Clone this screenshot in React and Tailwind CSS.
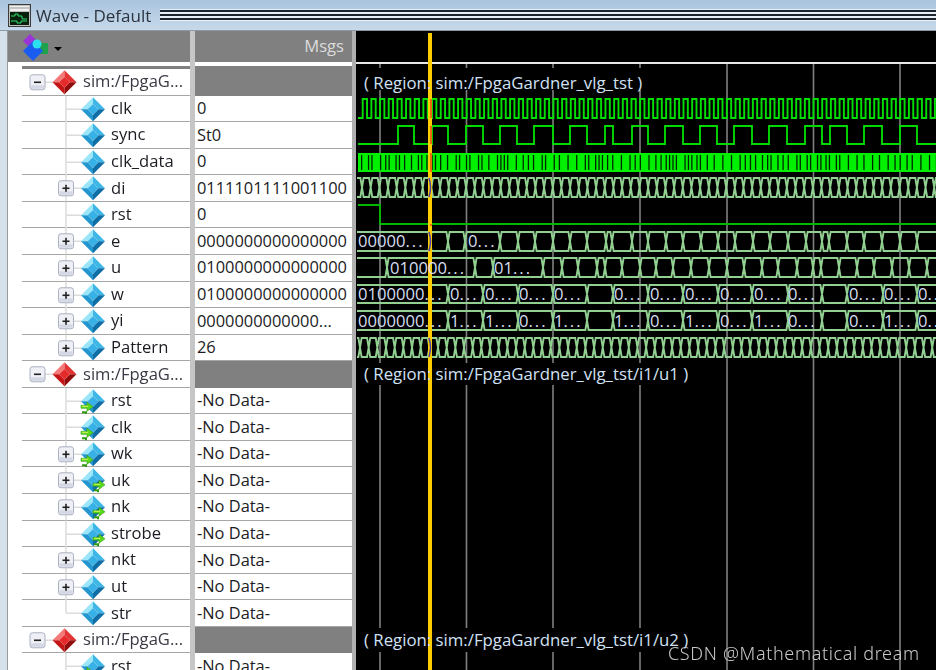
import React from "react";

const ROW_H = 26.57;

const rows = [
  { type: "group", name: "sim:/FpgaG..." },
  { name: "clk", value: "0" },
  { name: "sync", value: "St0" },
  { name: "clk_data", value: "0" },
  { name: "di", value: "0111101111001100", plus: true },
  { name: "rst", value: "0" },
  { name: "e", value: "0000000000000000", plus: true },
  { name: "u", value: "0100000000000000", plus: true },
  { name: "w", value: "0100000000000000", plus: true },
  { name: "yi", value: "0000000000000...", plus: true },
  { name: "Pattern", value: "26", plus: true, last: true },
  { type: "group", name: "sim:/FpgaG..." },
  { name: "rst", value: "-No Data-", arrow: "left" },
  { name: "clk", value: "-No Data-", arrow: "left" },
  { name: "wk", value: "-No Data-", arrow: "left", plus: true },
  { name: "uk", value: "-No Data-", arrow: "right", plus: true },
  { name: "nk", value: "-No Data-", arrow: "right", plus: true },
  { name: "strobe", value: "-No Data-", arrow: "right" },
  { name: "nkt", value: "-No Data-", plus: true },
  { name: "ut", value: "-No Data-", plus: true },
  { name: "str", value: "-No Data-", last: true },
  { type: "group", name: "sim:/FpgaG..." },
  { name: "rst", value: "-No Data-", arrow: "left" },
];

const syncEdges = [398, 414, 432, 448, 466, 483, 500, 517, 534, 553, 570, 587, 605, 613, 632, 648, 665, 683, 700, 717, 734, 752, 769, 787, 805, 822, 830, 847, 864, 882, 900, 917];
const eEdges = [430, 448, 465, 500, 518, 535, 553, 570, 587, 606, 612, 632, 648, 666, 683, 701, 718, 735, 753, 770, 788, 806, 822, 829, 847, 864, 882, 900, 917];
const uEdges = [387, 475, 493, 543, 562, 578, 597, 605, 622, 640, 656, 673, 691, 709, 727, 744, 762, 778, 797, 813, 821, 839, 857, 874, 892, 909, 927];
const wEdges = [448, 483, 518, 553, 587, 613, 648, 683, 718, 752, 788, 822, 847, 883, 917];
const gridLines = [380, 466.5, 553, 640, 727, 813.5, 900];

const lattice = (start) => {
  const out = [];
  for (let x = start; x < 940; x += 8.67) out.push(x);
  return out;
};

// clk_data: thin black gaps over a solid green bar
const dataGaps = [];
let seed = 7;
for (let x = 361; x < 936; ) {
  seed = (seed * 137 + 59) % 251;
  dataGaps.push(x);
  x += 3.4 + (seed % 4) * 1.75;
}

const Diamond = ({ cx, cy, r, red }) => {
  const c = red
    ? ["#f47a7a", "#e23434", "#8f0c0c", "#c41616", "#e42a2a"]
    : ["#9ce6fa", "#3fb7e6", "#0f6ea6", "#2496cf", "#38b2e6"];
  const i = r * 0.45;
  const t = `${cx},${cy - r}`;
  const e = `${cx + r},${cy}`;
  const b = `${cx},${cy + r}`;
  const w = `${cx - r},${cy}`;
  const it = `${cx},${cy - i}`;
  const ie = `${cx + i},${cy}`;
  const ib = `${cx},${cy + i}`;
  const iw = `${cx - i},${cy}`;
  return (
    <g>
      <polygon points={`${w} ${t} ${it} ${iw}`} fill={c[0]} />
      <polygon points={`${t} ${e} ${ie} ${it}`} fill={c[1]} />
      <polygon points={`${e} ${b} ${ib} ${ie}`} fill={c[2]} />
      <polygon points={`${b} ${w} ${iw} ${ib}`} fill={c[3]} />
      <polygon points={`${it} ${ie} ${ib} ${iw}`} fill={c[4]} />
    </g>
  );
};

const Expander = ({ cx, cy, plus }) => (
  <g>
    <rect x={cx - 7.5} y={cy - 7.5} width="15" height="15" rx="2.5" fill="#eef0f6" stroke="#a9b0c0" />
    <rect x={cx - 6.5} y={cy + 3} width="13" height="3.5" fill="#d3d8e4" />
    <rect x={cx - 3.5} y={cy - 0.8} width="7" height="1.6" fill="#222" />
    {plus && <rect x={cx - 0.8} y={cy - 3.5} width="1.6" height="7" fill="#222" />}
  </g>
);

const PortArrow = ({ cx, cy }) => (
  <g>
    <path d={`M${cx - 6} ${cy - 2}h6v-3l6 4.5l-6 4.5v-3h-6z`} fill="#5cd81c" stroke="#2f9a10" strokeWidth="0.6" />
    <path d={`M${cx - 5} ${cy + 5}h4v2`} fill="none" stroke="#2f9a10" strokeWidth="2" />
    <path d={`M${cx - 5} ${cy - 1}h6`} stroke="#d8f860" strokeWidth="1" />
  </g>
);

const Glyphs = ({ row }) => {
  const mid = ROW_H / 2;
  if (row.type === "group") {
    return (
      <svg width="61" height={ROW_H} className="shrink-0">
        <path d={`M23 ${mid}H33M42.5 ${mid}V${ROW_H}`} stroke="#dcdcdc" strokeWidth="1.5" fill="none" />
        <Expander cx={15.5} cy={mid} />
        <Diamond cx={42.5} cy={mid} r={12} red />
      </svg>
    );
  }
  return (
    <svg width="89" height={ROW_H} className="shrink-0">
      <path d={`M44 0V${row.last ? mid : ROW_H}M44 ${mid}H60`} stroke="#dcdcdc" strokeWidth="1.5" fill="none" />
      {row.plus && <Expander cx={44} cy={mid} plus />}
      <Diamond cx={71} cy={mid} r={12} />
      {row.arrow === "left" && <PortArrow cx={65} cy={mid + 6} />}
      {row.arrow === "right" && <PortArrow cx={77} cy={mid + 5} />}
    </svg>
  );
};

const Bus = ({ edges, y0, y1, slope = 1.6, start = 357, end = 937 }) => {
  let top = `M${start} ${y0}`;
  let bottom = `M${start} ${y1}`;
  let flip = false;
  edges.forEach((x) => {
    const [a, b] = flip ? [y1, y0] : [y0, y1];
    top += `L${x - slope} ${a}L${x + slope} ${b}`;
    bottom += `L${x - slope} ${b}L${x + slope} ${a}`;
    flip = !flip;
  });
  top += `L${end} ${flip ? y1 : y0}`;
  bottom += `L${end} ${flip ? y0 : y1}`;
  return <path d={`${top}${bottom}`} fill="none" stroke="#92d092" strokeWidth="1.9" />;
};

const Digital = ({ edges, high, low, startHigh = false, color = "#00e000" }) => {
  let level = startHigh;
  let d = `M358 ${level ? high : low}`;
  edges.forEach((x) => {
    d += `H${x}V${level ? low : high}`;
    level = !level;
  });
  d += `H936`;
  return <path d={d} fill="none" stroke={color} strokeWidth="1.9" />;
};

const BusLabels = ({ y, items }) =>
  items.map(([x, label]) => (
    <text key={`${y}-${x}`} x={x} y={y} className="fill-[#d6def2] text-[16.6px]">
      {label}
      <tspan className="tracking-[2px]">...</tspan>
    </text>
  ));

const RegionText = ({ y, label }) => (
  <text x="364" y={y} className="fill-[#d2e2f6] text-[16.8px]">
    {label}
  </text>
);

const Waves = () => {
  const zeros = [450, 485, 519, 554, 614, 650, 685, 720, 754, 788, 849, 884, 918];
  const yiBits = ["1", "1", "0", "1", "1", "0", "1", "0", "1", "0", "0", "1", "0"];
  return (
    <svg width="580" height="639" viewBox="356 31 580 639" className="block">
      <rect x="356" y="31" width="580" height="639" fill="#000" />
      <rect x="356" y="62" width="580" height="2" fill="#e8e8e8" />
      {gridLines.map((x) => (
        <line key={x} x1={x} x2={x} y1="64" y2="670" stroke="#808080" strokeWidth="1.6" />
      ))}
      <rect x="362" y="68" width="282" height="22" fill="#000" />
      <rect x="362" y="363" width="325" height="22" fill="#000" />
      <rect x="362" y="628" width="328" height="24" fill="#000" />

      <Digital edges={lattice(362.7).flatMap((x) => [x, x + 4.33])} high={99} low={118} />
      <Digital edges={syncEdges} high={126} low={144} color="#00d800" />
      <rect x="358" y="153" width="578" height="19" fill="#00f000" />
      {dataGaps.map((x) => (
        <rect key={x} x={x} y="155" width="1.3" height="15" fill="#002800" />
      ))}
      <Bus edges={lattice(362)} y0={178} y1={197} />
      <Digital edges={[380]} high={205} low={224} startHigh color="#00b800" />
      <Bus edges={eEdges} y0={232} y1={251} />
      <Bus edges={uEdges} y0={258} y1={277} />
      <Bus edges={wEdges} y0={285} y1={303} />
      <Bus edges={wEdges} y0={311} y1={330} />
      <Bus edges={lattice(360)} y0={338} y1={357} />

      <rect x="428" y="33" width="4" height="637" fill="#ffcc00" />
      <path d="M431 99V118M431 126V144M431 153V172M431 224V226" stroke="#e84a10" strokeWidth="1.5" />
      <path d="M429 178q3 9 0 19M429 232q3 9 0 19M429 338q3 9 0 19" fill="none" stroke="#4a44a8" strokeWidth="1.5" />

      <RegionText y={89} label="( Region: sim:/FpgaGardner_vlg_tst )" />
      <RegionText y={380} label="( Region: sim:/FpgaGardner_vlg_tst/i1/u1 )" />
      <RegionText y={646} label="( Region: sim:/FpgaGardner_vlg_tst/i1/u2 )" />

      <BusLabels y={247} items={[[358, "00000"], [468, "0"]]} />
      <BusLabels y={274} items={[[390, "010000"], [494, "01"]]} />
      <BusLabels y={300} items={[[358, "0100000"], ...zeros.map((x) => [x, "0"])]} />
      <BusLabels y={327} items={[[358, "0000000"], ...zeros.map((x, i) => [x, yiBits[i]])]} />
    </svg>
  );
};

const TitleIcon = () => (
  <svg width="23" height="23" viewBox="0 0 23 23" className="shrink-0">
    <rect x="0.5" y="0.5" width="22" height="22" fill="#c0c0c0" stroke="#3c3c3c" />
    <rect x="2" y="2" width="19" height="5" fill="#f0f0f0" />
    <path d="M2 4h19" stroke="#999" />
    <rect x="2" y="8" width="19" height="13" fill="#08200c" />
    <path d="M3 12h4v-2h3v2h4v3h5M3 17h6v2h4v-2h6" stroke="#2fe070" fill="none" />
  </svg>
);

const HeaderIcon = () => (
  <svg width="30" height="29" viewBox="0 0 30 29" className="shrink-0">
    <polygon points="1,8 8,1 15,8 8,15" fill="#9a34d8" />
    <rect x="18" y="10" width="8" height="11" fill="#1ea04c" />
    <polygon points="1,18 11,8 21,18 11,28" fill="#1a5cf0" />
    <circle cx="15" cy="11" r="4.5" fill="#2ce0f0" />
  </svg>
);

export default function App() {
  return (
    <div className="relative w-[936px] h-[670px] overflow-hidden bg-[#d4e0ea] font-['Open_Sans',sans-serif] text-[16.6px] text-[#1c1c24]">
      <div className="blur-[0.6px]">
        <div className="h-[31px] flex items-center pl-[8px] bg-linear-to-b from-[#aac4de] to-[#c6d9ea] border-b border-[#8c9aa8]">
          <TitleIcon />
          <span className="ml-[5px] text-[17px] leading-none text-[#2c3440] w-[124px] shrink-0 whitespace-nowrap">
            Wave - Default
          </span>
          <div className="flex-1 flex flex-col gap-[2px] py-[1px] bg-[#e8f0f6]">
            <div className="h-[2px] bg-[#1c2430]" />
            <div className="h-[2px] bg-[#1c2430]" />
            <div className="h-[2px] bg-[#1c2430]" />
          </div>
        </div>

        <div className="flex h-[639px]">
          <div className="w-[8px] shrink-0 border-r border-[#9a9a9a] bg-[#d4e0ea]" />
          <div className="w-[344px] shrink-0 bg-[#c6c6c6] overflow-hidden">
            <div className="flex h-[31px]">
              <div className="w-[182px] shrink-0 bg-[#808080] pl-[14px] pt-[2px] flex items-start">
                <HeaderIcon />
                <span className="ml-[2px] mt-[14px] w-0 h-0 border-x-[4px] border-t-[4px] border-x-transparent border-t-black" />
              </div>
              <div className="w-[5px] shrink-0" />
              <div className="w-[157px] shrink-0 bg-[#808080] pr-[8px] flex items-center justify-end text-[#dcdcdc]">
                Msgs
              </div>
            </div>

            <div className="flex h-[7px]">
              <div className="w-[182px] shrink-0 bg-white pl-[14px] pt-[4px]">
                <div className="h-[3px] bg-[#808080]" />
              </div>
              <div className="w-[5px] shrink-0" />
              <div className="w-[157px] shrink-0 bg-white pt-[4px]">
                <div className="h-[3px] bg-[#808080]" />
              </div>
            </div>

            {rows.map((row, i) => (
              <div key={i} className="flex h-[26.57px]">
                <div className="w-[182px] shrink-0 bg-white pl-[14px]">
                  <div className="relative h-full flex items-center border-b-[1.5px] border-[#a6a6a6] whitespace-nowrap">
                    <div className="absolute left-0 top-0">
                      <Glyphs row={row} />
                    </div>
                    <span className={row.type === "group" ? "ml-[61px] text-[#3a3a44]" : "ml-[89px]"}>
                      {row.name}
                    </span>
                  </div>
                </div>
                <div className="w-[5px] shrink-0" />
                {row.type === "group" ? (
                  <div className="w-[157px] shrink-0 bg-[#808080]" />
                ) : (
                  <div className="w-[157px] shrink-0 bg-white pl-[2px] flex items-center border-b-[1.5px] border-[#a6a6a6] whitespace-nowrap text-[16.4px]">
                    {row.value}
                  </div>
                )}
              </div>
            ))}
          </div>
          <div className="w-[4px] shrink-0 bg-[#b0b0b0]" />
          <Waves />
        </div>
      </div>

      <div className="absolute left-[668px] top-[640px] text-[18px] leading-[26px] tracking-[0.65px] text-[#c8c8c8] font-['Noto_Sans',sans-serif] font-light whitespace-nowrap">
        CSDN @Mathematical dream
      </div>
    </div>
  );
}
